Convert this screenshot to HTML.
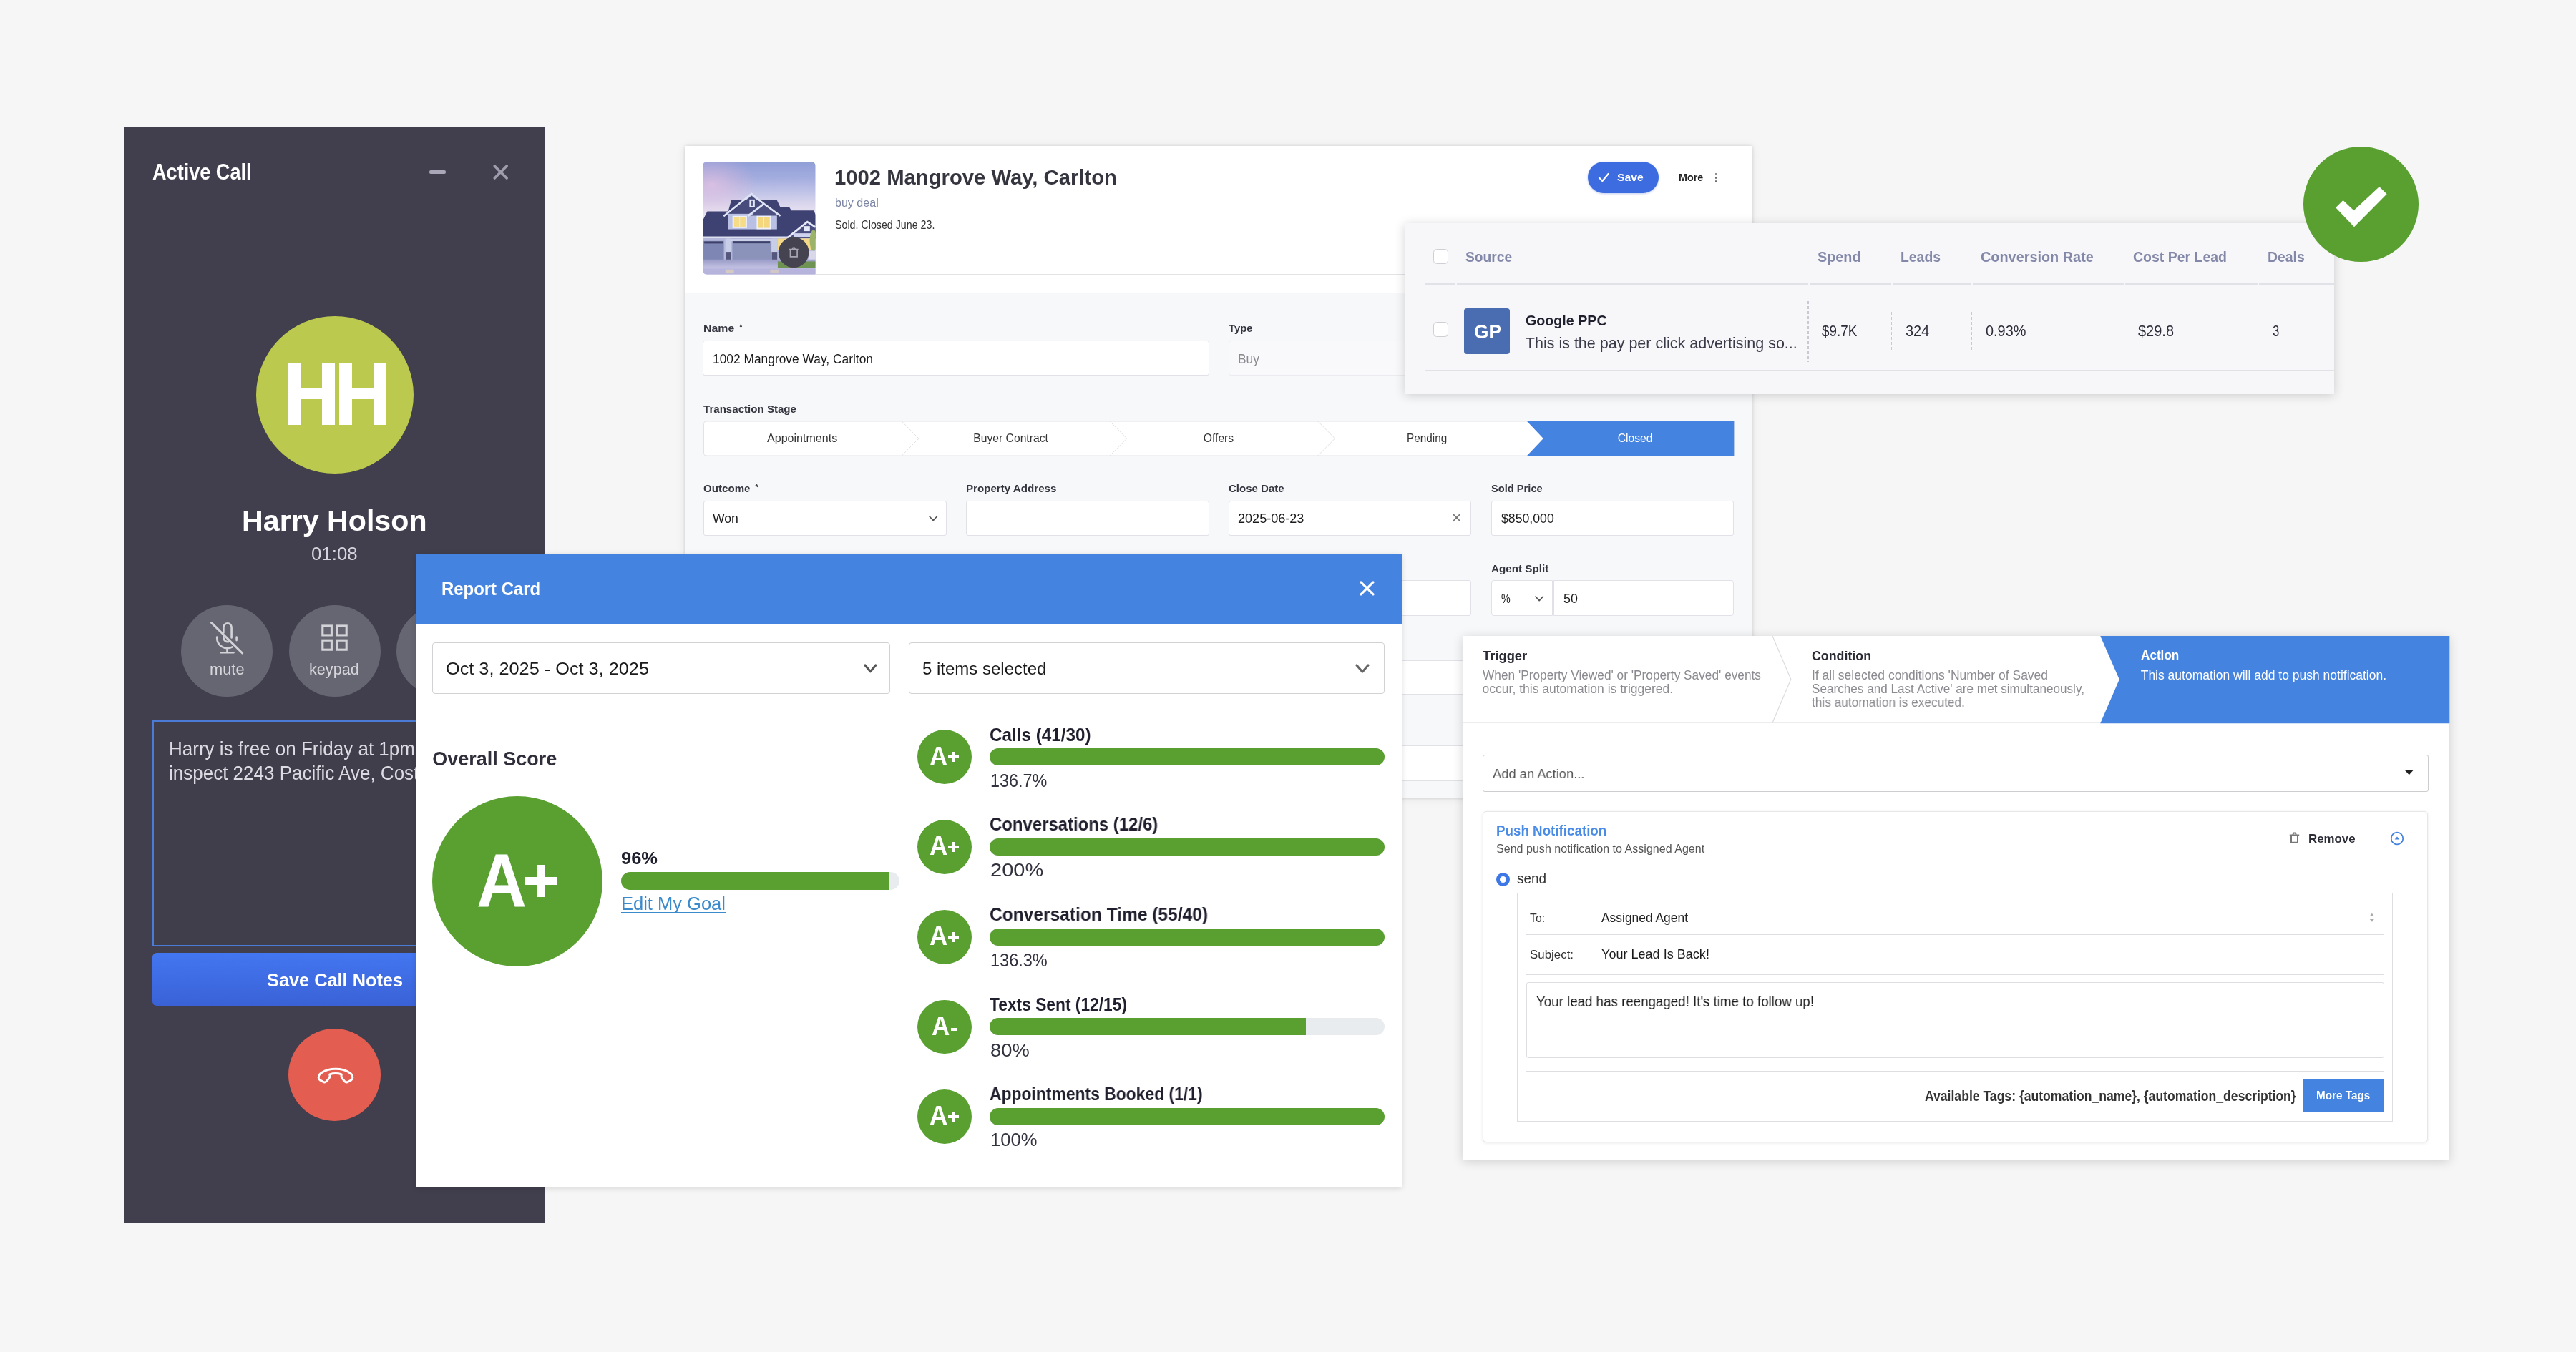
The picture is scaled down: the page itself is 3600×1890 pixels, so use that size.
<!DOCTYPE html>
<html><head><meta charset="utf-8"><title>CRM dashboard</title><style>
html,body{margin:0;padding:0}
body{width:3600px;height:1890px;background:#f6f6f6;position:relative;overflow:hidden;font-family:"Liberation Sans",sans-serif}
.a{position:absolute;box-sizing:border-box}
.t{position:absolute;white-space:nowrap;line-height:1;transform-origin:0 50%}
svg{overflow:visible}
#w{position:absolute;left:0;top:0;width:3600px;height:1890px;will-change:transform}
</style></head><body><div id="w">
<div class="a" style="left:173.00px;top:178.00px;width:589.00px;height:1532.00px;background:#413f4d;"></div>
<div class="t" style="left:213.00px;top:224.75px;font-size:31px;color:#fff;font-weight:bold;transform:scaleX(0.8739);">Active Call</div>
<div class="a" style="left:600.00px;top:238.40px;width:23.00px;height:4.20px;background:#aaa8b8;border-radius:2px;"></div>
<svg class="a" style="left:688px;top:229px;" width="24" height="24" viewBox="688 229 24 24"><path d="M691.2 232.1L708.2 249.1M708.2 232.1L691.2 249.1" stroke="#9f9dad" stroke-width="3.6" stroke-linecap="round" fill="none"/></svg>
<div class="a" style="left:357.50px;top:441.50px;width:220.00px;height:220.00px;background:#bcc94f;border-radius:50%;"></div>
<div class="a" style="left:402.20px;top:508.00px;width:17.80px;height:85.50px;background:#fff;"></div>
<div class="a" style="left:450.30px;top:508.00px;width:17.70px;height:85.50px;background:#fff;"></div>
<div class="a" style="left:474.20px;top:508.00px;width:17.60px;height:85.50px;background:#fff;"></div>
<div class="a" style="left:522.80px;top:508.00px;width:17.60px;height:85.50px;background:#fff;"></div>
<div class="a" style="left:419.00px;top:542.30px;width:32.00px;height:16.00px;background:#fff;"></div>
<div class="a" style="left:491.00px;top:542.30px;width:32.50px;height:16.00px;background:#fff;"></div>
<div class="t" style="left:338.40px;top:707.79px;font-size:41px;color:#fff;font-weight:bold;transform:scaleX(1.0043);">Harry Holson</div>
<div class="t" style="left:435.40px;top:760.69px;font-size:26px;color:#d5d4dc;transform:scaleX(0.9929);">01:08</div>
<div class="a" style="left:253.00px;top:846.00px;width:128.00px;height:128.00px;background:#666672;border-radius:50%;"></div>
<div class="a" style="left:403.50px;top:846.00px;width:128.00px;height:128.00px;background:#666672;border-radius:50%;"></div>
<div class="a" style="left:554.00px;top:846.00px;width:128.00px;height:128.00px;background:#666672;border-radius:50%;"></div>
<svg class="a" style="left:290px;top:865px;" width="55" height="55" viewBox="290 865 55 55"><g fill="none" stroke="#d2d2d7" stroke-width="2.6" stroke-linecap="round" stroke-linejoin="round">
<path d="M312.4 884.5V877a5.6 5.6 0 0 1 11.2 0v14.5"/>
<path d="M312.4 889v2.5a5.6 5.6 0 0 0 7.6 5.2"/>
<path d="M303.2 890.5v1.2a14.5 14.5 0 0 0 21.5 12.6"/>
<path d="M330.6 890.5v4.6"/>
<path d="M317.5 906.5V912M308.3 912.3H326.5"/>
<path d="M295.6 870.6L338.6 913" stroke-width="3"/></g></svg>
<div class="t" style="left:292.50px;top:925.37px;font-size:22px;color:#d6d6db;transform:scaleX(0.9919);">mute</div>
<svg class="a" style="left:445px;top:870px;" width="45" height="45" viewBox="445 870 45 45"><g fill="none" stroke="#d2d2d7" stroke-width="3.1">
<rect x="450.8" y="874.9" width="12.6" height="13"/><rect x="471.2" y="874.9" width="13" height="13"/>
<rect x="450.8" y="895.2" width="12.6" height="13"/><rect x="471.2" y="895.2" width="13" height="13"/></g></svg>
<div class="t" style="left:432.40px;top:925.37px;font-size:22px;color:#d6d6db;transform:scaleX(0.9838);">keypad</div>
<div class="a" style="left:213.00px;top:1007.30px;width:509.00px;height:315.70px;border:2px solid #4b7bd6;background:#3f3e4a;"></div>
<div class="t" style="left:236.00px;top:1032.69px;font-size:27.3px;color:#dcdbe3;transform:scaleX(0.9526);">Harry is free on Friday at 1pm to</div>
<div class="t" style="left:236.00px;top:1066.89px;font-size:27.3px;color:#dcdbe3;transform:scaleX(0.9526);">inspect 2243 Pacific Ave, Costa Mesa</div>
<div class="a" style="left:213.00px;top:1332.00px;width:509.00px;height:73.50px;background:linear-gradient(#4376f1,#3a62d6);border-radius:6px;"></div>
<div class="t" style="left:372.60px;top:1356.79px;font-size:26px;color:#fff;font-weight:bold;transform:scaleX(0.9740);">Save Call Notes</div>
<div class="a" style="left:403.00px;top:1438.20px;width:128.80px;height:128.80px;background:#e35d50;border-radius:50%;"></div>
<svg class="a" style="left:440px;top:1488px;" width="58" height="30" viewBox="440 1488 58 30"><path d="M445.2 1506.5c0-3 1.2-5 3.6-6.6c5.6-3.8 12.2-5.6 20.2-5.6s14.6 1.8 20.2 5.6c2.400 1.6 3.600 3.600 3.600 6.600c0 1.500-0.700 2.700-2.000 3.400l-4.300 2.400c-1.800 1-3.700 0.600-5.000-0.900l-3.400-4.000c-0.900-1.100-1.300-2.300-1.100-3.700l0.300-1.900c-2.700-0.900-5.500-1.300-8.300-1.300s-5.600 0.400-8.300 1.300l0.300 1.900c0.200 1.400-0.200 2.600-1.100 3.700l-3.400 4.000c-1.300 1.500-3.200 1.900-5.000 0.900l-4.300-2.400c-1.300-0.700-2.000-1.900-2.000-3.400z" fill="none" stroke="#fff" stroke-width="3" stroke-linejoin="round"/></svg>
<div class="a" style="left:957.00px;top:203.70px;width:1491.50px;height:912.30px;background:#f7f8fa;box-shadow:0 0 5px rgba(0,0,0,.13),0 1px 14px rgba(0,0,0,.07);"></div>
<div class="a" style="left:957.00px;top:203.70px;width:1491.50px;height:206.10px;background:#fff;"></div>
<div class="a" style="left:1140.00px;top:382.80px;width:1283.50px;height:1.20px;background:#e3e3e8;"></div>
<svg class="a" style="left:982.2px;top:226px" width="157.8" height="157.8" viewBox="92 83 1185 1185">
<defs><linearGradient id="sky" x1="0" y1="0" x2="0" y2="1"><stop offset="0" stop-color="#919fd8"/><stop offset=".14" stop-color="#a2acde"/><stop offset=".28" stop-color="#c3c5e8"/><stop offset=".4" stop-color="#dfdaee"/><stop offset=".52" stop-color="#eee7f3"/></linearGradient>
<radialGradient id="pk" cx=".08" cy=".3" r=".4"><stop offset="0" stop-color="#e8c3e2" stop-opacity=".7"/><stop offset="1" stop-color="#e3b4d8" stop-opacity="0"/></radialGradient>
<linearGradient id="drv" x1="0" y1="0" x2="0" y2="1"><stop offset="0" stop-color="#9a9cc8"/><stop offset=".55" stop-color="#c2c0e2"/><stop offset="1" stop-color="#b2b0da"/></linearGradient>
<clipPath id="hc"><path d="M137 83H1232a45 45 0 0 1 45 45V1268H137a45 45 0 0 1-45-45V128a45 45 0 0 1 45-45z"/></clipPath></defs>
<g clip-path="url(#hc)">
<rect x="92" y="83" width="1185" height="1185" fill="url(#sky)"/><rect x="92" y="83" width="1185" height="800" fill="url(#pk)"/>
<path d="M92 700L140 605H360L392 488H872L905 558H1000L1022 596H1258L1277 640V900H92z" fill="#3e4272"/>
<path d="M92 885H1277V1130H92z" fill="#b4b9dc"/>
<path d="M355 630H872V795H355z" fill="#b9c0e4"/>
<path d="M605 440L380 625H830z" fill="#474c7c"/>
<path d="M735 540L600 650H880z" fill="#4c5182"/>
<path d="M312 655L605 420L740 530" fill="none" stroke="#dfe3f6" stroke-width="20"/>
<path d="M565 655L735 525L908 652" fill="none" stroke="#dfe3f6" stroke-width="20"/>
<rect x="583" y="480" width="56" height="82" fill="#e4e8f8"/><rect x="597" y="494" width="28" height="54" fill="#5a5f90"/>
<rect x="405" y="652" width="152" height="128" fill="#eef0fa"/><rect x="420" y="668" width="122" height="98" fill="#f6dc86"/><rect x="478" y="668" width="6" height="98" fill="#eef0fa"/>
<rect x="658" y="652" width="152" height="142" fill="#eef0fa"/><rect x="674" y="668" width="122" height="110" fill="#f4d67c"/><rect x="732" y="668" width="6" height="110" fill="#eef0fa"/>
<path d="M300 795H900L912 868H292z" fill="#3e4272"/>
<rect x="92" y="868" width="910" height="18" fill="#e6e9f8"/>
<rect x="100" y="915" width="214" height="200" fill="#7e87b3"/><rect x="108" y="920" width="198" height="22" fill="#3d416a"/>
<rect x="403" y="912" width="404" height="212" fill="#8b93bb"/><rect x="412" y="918" width="386" height="22" fill="#3d416a"/>
<rect x="388" y="898" width="434" height="16" fill="#e6e9f8"/>
<rect x="330" y="890" width="58" height="225" fill="#c8cde8"/><rect x="332" y="1030" width="54" height="85" fill="#55567c"/>
<rect x="815" y="890" width="62" height="225" fill="#c8cde8"/><rect x="817" y="1030" width="58" height="85" fill="#55567c"/>
<rect x="878" y="890" width="399" height="120" fill="#f5d888"/>
<path d="M985 885L1190 715L1277 772V885z" fill="#4a4f80"/>
<path d="M985 880L1190 715L1277 772" fill="none" stroke="#e6e9f8" stroke-width="20"/>
<rect x="1155" y="760" width="62" height="52" fill="#e6e9f8"/><rect x="1050" y="835" width="227" height="40" fill="#cfd3ee"/>
<ellipse cx="1255" cy="910" rx="40" ry="110" fill="#9bb46a"/>
<rect x="1200" y="1020" width="77" height="100" fill="#d8d8ea"/>
<rect x="92" y="1110" width="1185" height="158" fill="url(#drv)"/>
<rect x="880" y="1130" width="397" height="70" fill="#6f9352"/>
<rect x="92" y="1205" width="1185" height="63" fill="#b5b3dc" opacity=".8"/>
<rect x="330" y="1215" width="90" height="40" fill="#e9d9b0" opacity=".6"/><rect x="800" y="1215" width="90" height="40" fill="#e9d9b0" opacity=".5"/>
<circle cx="1047" cy="1035" r="160" fill="#45434f"/>
<g fill="none" stroke="#a6a5b2" stroke-width="13"><path d="M1012 1006V1080H1084V1006"/><path d="M1000 1003H1096"/><path d="M1034 1000L1040 986H1056L1062 1000"/></g>
</g></svg>
<div class="t" style="left:1165.80px;top:233.85px;font-size:29px;color:#35353f;font-weight:bold;transform:scaleX(1.0086);">1002 Mangrove Way, Carlton</div>
<div class="t" style="left:1167.20px;top:275.13px;font-size:16.5px;color:#7b84a3;transform:scaleX(0.9732);">buy deal</div>
<div class="t" style="left:1167.20px;top:306.28px;font-size:16.2px;color:#333;transform:scaleX(0.8800);">Sold. Closed June 23.</div>
<div class="a" style="left:2219.30px;top:226.00px;width:98.90px;height:44.00px;background:#3d6ce0;border-radius:22px;box-shadow:0 1px 3px rgba(40,80,200,.3);"></div>
<svg class="a" style="left:2230px;top:238px;" width="22" height="20" viewBox="2230 238 22 20"><path d="M2235 248.6L2239.3 253L2247.6 243" stroke="#fff" stroke-width="2.2" fill="none" stroke-linecap="round" stroke-linejoin="round"/></svg>
<div class="t" style="left:2259.80px;top:240.48px;font-size:15.5px;color:#fff;font-weight:bold;transform:scaleX(1.0140);">Save</div>
<div class="t" style="left:2345.70px;top:241.35px;font-size:14px;color:#222;font-weight:bold;transform:scaleX(1.0221);">More</div>
<div class="a" style="left:2396.60px;top:241.55px;width:2.90px;height:2.90px;background:#6a6a6a;border-radius:50%;"></div>
<div class="a" style="left:2396.60px;top:246.75px;width:2.90px;height:2.90px;background:#6a6a6a;border-radius:50%;"></div>
<div class="a" style="left:2396.60px;top:251.85px;width:2.90px;height:2.90px;background:#6a6a6a;border-radius:50%;"></div>
<div class="t" style="left:983.00px;top:451.38px;font-size:15.5px;color:#35353f;font-weight:bold;transform:scaleX(1.0237);">Name</div>
<div class="t" style="left:1033.20px;top:452.19px;font-size:11px;color:#35353f;font-weight:bold;">*</div>
<div class="a" style="left:982.40px;top:476.00px;width:707.40px;height:49.30px;background:#fff;border:1px solid #e1e1e7;border-radius:3px;"></div>
<div class="t" style="left:996.10px;top:492.76px;font-size:18px;color:#1a1a1a;transform:scaleX(0.9651);">1002 Mangrove Way, Carlton</div>
<div class="t" style="left:1716.80px;top:451.38px;font-size:15.5px;color:#35353f;font-weight:bold;transform:scaleX(0.9563);">Type</div>
<div class="a" style="left:1716.80px;top:476.00px;width:706.70px;height:49.30px;background:#f9f9fb;border:1px solid #ebebf0;border-radius:3px;"></div>
<div class="t" style="left:1729.80px;top:492.76px;font-size:18px;color:#8a8a90;transform:scaleX(0.9676);">Buy</div>
<div class="t" style="left:983.00px;top:563.68px;font-size:15.5px;color:#35353f;font-weight:bold;transform:scaleX(0.9735);">Transaction Stage</div>
<svg class="a" style="left:980px;top:586px" width="1446" height="54" viewBox="980 586 1446 54">
<path d="M987 589H2423.3V637H987a3.500 3.500 0 0 1-3.500-3.500V592.500a3.500 3.500 0 0 1 3.500-3.500z" fill="#fff" stroke="#e2e2e8" stroke-width="1"/>
<path d="M2133.6 588.5H2423.3V637.5H2133.6L2156.8 613z" fill="#4583e0"/>
<g fill="none" stroke="#e2e2e8" stroke-width="1"><path d="M1260.2 589L1284 613L1260.2 637"/><path d="M1551 589L1574.800 613L1551 637"/><path d="M1841.800 589L1865.600 613L1841.800 637"/></g></svg>
<div class="t" style="left:1072.05px;top:604.81px;font-size:15.7px;color:#333;transform:scaleX(1.0239);">Appointments</div>
<div class="t" style="left:1360.25px;top:604.81px;font-size:15.7px;color:#333;">Buyer Contract</div>
<div class="t" style="left:1681.75px;top:604.81px;font-size:15.7px;color:#333;">Offers</div>
<div class="t" style="left:1966.25px;top:604.81px;font-size:15.7px;color:#333;transform:scaleX(0.9771);">Pending</div>
<div class="t" style="left:2260.65px;top:604.81px;font-size:15.7px;color:#fff;">Closed</div>
<div class="t" style="left:983.00px;top:675.38px;font-size:15.5px;color:#35353f;font-weight:bold;transform:scaleX(0.9748);">Outcome</div>
<div class="t" style="left:1055.50px;top:676.19px;font-size:11px;color:#35353f;font-weight:bold;">*</div>
<div class="t" style="left:1349.80px;top:675.38px;font-size:15.5px;color:#35353f;font-weight:bold;transform:scaleX(0.9760);">Property Address</div>
<div class="t" style="left:1716.80px;top:675.38px;font-size:15.5px;color:#35353f;font-weight:bold;transform:scaleX(0.9688);">Close Date</div>
<div class="t" style="left:2083.60px;top:675.38px;font-size:15.5px;color:#35353f;font-weight:bold;transform:scaleX(0.9460);">Sold Price</div>
<div class="a" style="left:983.00px;top:699.50px;width:339.50px;height:49.70px;background:#fff;border:1px solid #e1e1e7;border-radius:3px;"></div>
<div class="a" style="left:1349.80px;top:699.50px;width:339.90px;height:49.70px;background:#fff;border:1px solid #e1e1e7;border-radius:3px;"></div>
<div class="a" style="left:1716.80px;top:699.50px;width:339.60px;height:49.70px;background:#fff;border:1px solid #e1e1e7;border-radius:3px;"></div>
<div class="a" style="left:2083.60px;top:699.50px;width:339.90px;height:49.70px;background:#fff;border:1px solid #e1e1e7;border-radius:3px;"></div>
<div class="t" style="left:995.90px;top:717.18px;font-size:17.5px;color:#1a1a1a;transform:scaleX(1.0068);">Won</div>
<svg class="a" style="left:1295.6px;top:719.0px;" width="16.40000000000009" height="11.599999999999909" viewBox="1295.6 719.0 16.40000000000009 11.599999999999909"><path d="M1298.6 722.0L1303.8 727.5999999999999L1309.0 722.0" fill="none" stroke="#555" stroke-width="1.7" stroke-linecap="round" stroke-linejoin="round"/></svg>
<div class="t" style="left:1730.10px;top:717.18px;font-size:17.5px;color:#1a1a1a;transform:scaleX(1.0323);">2025-06-23</div>
<svg class="a" style="left:2028px;top:716px;" width="16" height="16" viewBox="2028 716 16 16"><path d="M2030.6 718.6L2040.6 728.600M2040.6 718.6L2030.6 728.600" stroke="#777" stroke-width="1.6" fill="none"/></svg>
<div class="t" style="left:2097.50px;top:717.18px;font-size:17.5px;color:#1a1a1a;transform:scaleX(1.0099);">$850,000</div>
<div class="t" style="left:2083.60px;top:787.38px;font-size:15.5px;color:#35353f;font-weight:bold;transform:scaleX(0.9816);">Agent Split</div>
<div class="a" style="left:983.00px;top:811.40px;width:339.50px;height:49.40px;background:#fff;border:1px solid #e1e1e7;border-radius:3px;"></div>
<div class="a" style="left:1349.80px;top:811.40px;width:339.90px;height:49.40px;background:#fff;border:1px solid #e1e1e7;border-radius:3px;"></div>
<div class="a" style="left:1716.80px;top:811.40px;width:339.60px;height:49.40px;background:#fff;border:1px solid #e1e1e7;border-radius:3px;"></div>
<div class="a" style="left:2083.60px;top:811.40px;width:86.80px;height:49.40px;background:#fff;border:1px solid #e1e1e7;border-radius:3px;border-radius:4px 0 0 4px;"></div>
<div class="a" style="left:2171.40px;top:811.40px;width:252.10px;height:49.40px;background:#fff;border:1px solid #e1e1e7;border-radius:3px;border-radius:0 4px 4px 0;"></div>
<div class="t" style="left:2097.50px;top:828.98px;font-size:17.5px;color:#1a1a1a;transform:scaleX(0.8154);">%</div>
<svg class="a" style="left:2143.3px;top:831.0px;" width="16.399999999999636" height="11.599999999999909" viewBox="2143.3 831.0 16.399999999999636 11.599999999999909"><path d="M2146.3 834.0L2151.5 839.5999999999999L2156.7 834.0" fill="none" stroke="#555" stroke-width="1.7" stroke-linecap="round" stroke-linejoin="round"/></svg>
<div class="t" style="left:2184.80px;top:828.98px;font-size:17.5px;color:#1a1a1a;transform:scaleX(1.0170);">50</div>
<div class="a" style="left:983.00px;top:923.10px;width:1440.50px;height:47.90px;background:#fff;border:1px solid #e1e1e7;border-radius:3px;"></div>
<div class="a" style="left:983.00px;top:1041.60px;width:1440.50px;height:50.00px;background:#fff;border:1px solid #e1e1e7;border-radius:3px;"></div>
<div class="a" style="left:1963.00px;top:311.70px;width:1299.00px;height:239.50px;background:#f7f7fa;box-shadow:0 2px 14px rgba(0,0,0,.17);"></div>
<div class="a" style="left:2003.30px;top:348.40px;width:20.50px;height:21.00px;background:#fff;border:1.5px solid #cfcfd6;border-radius:4.5px;"></div>
<div class="t" style="left:2048.20px;top:349.34px;font-size:20.5px;color:#8388a8;font-weight:bold;transform:scaleX(0.9382);">Source</div>
<div class="t" style="left:2540.00px;top:349.34px;font-size:20.5px;color:#8388a8;font-weight:bold;transform:scaleX(0.9660);">Spend</div>
<div class="t" style="left:2656.40px;top:349.34px;font-size:20.5px;color:#8388a8;font-weight:bold;transform:scaleX(0.9452);">Leads</div>
<div class="t" style="left:2767.90px;top:349.34px;font-size:20.5px;color:#8388a8;font-weight:bold;transform:scaleX(0.9686);">Conversion Rate</div>
<div class="t" style="left:2981.40px;top:349.34px;font-size:20.5px;color:#8388a8;font-weight:bold;transform:scaleX(0.9502);">Cost Per Lead</div>
<div class="t" style="left:3168.60px;top:349.34px;font-size:20.5px;color:#8388a8;font-weight:bold;transform:scaleX(0.9473);">Deals</div>
<div class="a" style="left:1992.00px;top:395.50px;width:1270.00px;height:3.10px;background:#e0e2e8;"></div>
<div class="a" style="left:2034.00px;top:395.50px;width:2.00px;height:3.10px;background:#f7f7fa;"></div>
<div class="a" style="left:2526.50px;top:395.50px;width:2.00px;height:3.10px;background:#f7f7fa;"></div>
<div class="a" style="left:2643.00px;top:395.50px;width:2.00px;height:3.10px;background:#f7f7fa;"></div>
<div class="a" style="left:2755.00px;top:395.50px;width:2.00px;height:3.10px;background:#f7f7fa;"></div>
<div class="a" style="left:2968.00px;top:395.50px;width:2.00px;height:3.10px;background:#f7f7fa;"></div>
<div class="a" style="left:3155.00px;top:395.50px;width:2.00px;height:3.10px;background:#f7f7fa;"></div>
<div class="a" style="left:2003.30px;top:450.30px;width:20.50px;height:21.00px;background:#fff;border:1.5px solid #cfcfd6;border-radius:4.5px;"></div>
<div class="a" style="left:2046.00px;top:431.30px;width:64.20px;height:64.20px;background:#4a6cb0;border-radius:4px;"></div>
<div class="t" style="left:2059.60px;top:450.29px;font-size:28px;color:#fff;font-weight:bold;transform:scaleX(0.9392);">GP</div>
<div class="t" style="left:2131.80px;top:437.22px;font-size:21px;color:#1f1f2e;font-weight:bold;transform:scaleX(0.9363);">Google PPC</div>
<div class="t" style="left:2131.80px;top:469.60px;font-size:21.5px;color:#3a3a48;">This is the pay per click advertising so...</div>
<div class="a" style="left:2526.40px;top:421.00px;width:1.20px;height:85.00px;background:repeating-linear-gradient(#c9c9d2 0 4px,transparent 4px 7px);"></div>
<div class="a" style="left:2642.60px;top:436.40px;width:1.20px;height:53.60px;background:repeating-linear-gradient(#c9c9d2 0 4px,transparent 4px 7px);"></div>
<div class="a" style="left:2754.40px;top:436.40px;width:1.20px;height:53.60px;background:repeating-linear-gradient(#c9c9d2 0 4px,transparent 4px 7px);"></div>
<div class="a" style="left:2968.00px;top:436.40px;width:1.20px;height:53.60px;background:repeating-linear-gradient(#c9c9d2 0 4px,transparent 4px 7px);"></div>
<div class="a" style="left:3154.80px;top:436.40px;width:1.20px;height:53.60px;background:repeating-linear-gradient(#c9c9d2 0 4px,transparent 4px 7px);"></div>
<div class="t" style="left:2546.40px;top:452.80px;font-size:21.5px;color:#2d2d3a;transform:scaleX(0.8759);">$9.7K</div>
<div class="t" style="left:2663.20px;top:452.80px;font-size:21.5px;color:#2d2d3a;transform:scaleX(0.9260);">324</div>
<div class="t" style="left:2775.00px;top:452.80px;font-size:21.5px;color:#2d2d3a;transform:scaleX(0.9253);">0.93%</div>
<div class="t" style="left:2988.20px;top:452.80px;font-size:21.5px;color:#2d2d3a;transform:scaleX(0.9293);">$29.8</div>
<div class="t" style="left:3175.70px;top:452.80px;font-size:21.5px;color:#2d2d3a;transform:scaleX(0.7794);">3</div>
<div class="a" style="left:1992.00px;top:517.00px;width:1270.00px;height:1.20px;background:#e0e2e8;"></div>
<div class="a" style="left:3219.10px;top:205.00px;width:160.80px;height:160.80px;background:#59a031;border-radius:50%;"></div>
<svg class="a" style="left:3255px;top:255px;" width="90" height="70" viewBox="3255 255 90 70"><path d="M3264.2 290.2L3274.5 280L3289.5 294.3L3325.1 261L3335.6 271.2L3290 317.2z" fill="#fff"/></svg>
<div class="a" style="left:2044.00px;top:889.00px;width:1379.30px;height:732.50px;background:#fff;box-shadow:0 2px 14px rgba(0,0,0,.16);"></div>
<div class="a" style="left:2044.00px;top:1010.00px;width:1379.30px;height:1.20px;background:#ececef;"></div>
<svg class="a" style="left:2044px;top:889px" width="1380" height="123" viewBox="2044 889 1380 123">
<path d="M2477 889L2502.8 949.5L2477 1010.5" fill="none" stroke="#dcdce0" stroke-width="1.2"/>
<path d="M2935.2 889H3423.3V1011.2H2935.2L2961.8 949.7z" fill="#4583e0"/></svg>
<div class="t" style="left:2071.60px;top:906.91px;font-size:19px;color:#2a2a35;font-weight:bold;transform:scaleX(0.9657);">Trigger</div>
<div class="t" style="left:2071.60px;top:936.18px;font-size:17.5px;color:#8a8a90;transform:scaleX(0.9864);">When &#x27;Property Viewed&#x27; or &#x27;Property Saved&#x27; events</div>
<div class="t" style="left:2071.60px;top:955.18px;font-size:17.5px;color:#8a8a90;">occur, this automation is triggered.</div>
<div class="t" style="left:2531.90px;top:906.91px;font-size:19px;color:#2a2a35;font-weight:bold;transform:scaleX(0.9364);">Condition</div>
<div class="t" style="left:2531.90px;top:936.18px;font-size:17.5px;color:#8a8a90;">If all selected conditions &#x27;Number of Saved</div>
<div class="t" style="left:2531.90px;top:955.18px;font-size:17.5px;color:#8a8a90;transform:scaleX(0.9789);">Searches and Last Active&#x27; are met simultaneously,</div>
<div class="t" style="left:2531.90px;top:974.18px;font-size:17.5px;color:#8a8a90;transform:scaleX(0.9864);">this automation is executed.</div>
<div class="t" style="left:2991.70px;top:906.41px;font-size:19px;color:#fff;font-weight:bold;transform:scaleX(0.9020);">Action</div>
<div class="t" style="left:2991.70px;top:936.18px;font-size:17.5px;color:#fff;">This automation will add to push notification.</div>
<div class="a" style="left:2071.60px;top:1055.00px;width:1322.00px;height:51.50px;background:#fff;border:1px solid #cdcdd0;border-radius:3px;"></div>
<div class="t" style="left:2086.30px;top:1072.11px;font-size:19px;color:#555;transform:scaleX(0.9655);">Add an Action...</div>
<svg class="a" style="left:3358px;top:1074px;" width="18" height="12" viewBox="3358 1074 18 12"><path d="M3360.9 1076.8H3372.6L3366.75 1083.3z" fill="#222"/></svg>
<div class="a" style="left:2072.30px;top:1133.60px;width:1321.10px;height:463.80px;background:#fff;border:1px solid #e7e7ea;border-radius:5px;box-shadow:0 1px 4px rgba(0,0,0,.09);"></div>
<div class="t" style="left:2090.80px;top:1152.49px;font-size:19.5px;color:#4a8be6;font-weight:bold;transform:scaleX(0.9623);">Push Notification</div>
<div class="t" style="left:2090.80px;top:1178.75px;font-size:16px;color:#555;transform:scaleX(1.0041);">Send push notification to Assigned Agent</div>
<svg class="a" style="left:3196px;top:1160px;" width="21" height="22" viewBox="3196 1160 21 22"><g fill="none" stroke="#777" stroke-width="2"><path d="M3202 1167.8V1177.7H3211V1167.8"/><path d="M3199.8 1167.5H3213.2"/><path d="M3204.3 1167L3205.3 1164.5H3207.8L3208.8 1167"/></g></svg>
<div class="t" style="left:3226.40px;top:1163.91px;font-size:17px;color:#2d2d38;font-weight:bold;transform:scaleX(0.9920);">Remove</div>
<svg class="a" style="left:3338px;top:1160px;" width="24" height="24" viewBox="3338 1160 24 24"><circle cx="3350" cy="1172" r="8.3" fill="none" stroke="#4583e0" stroke-width="1.8"/><path d="M3346.6 1173.600L3350 1169.4L3353.400 1173.600z" fill="#4583e0"/></svg>
<div class="a" style="left:2090.80px;top:1219.50px;width:19.00px;height:19.00px;border:5px solid #3d78e6;border-radius:50%;background:#fff;"></div>
<div class="t" style="left:2119.80px;top:1218.07px;font-size:20px;color:#333;transform:scaleX(0.9458);">send</div>
<div class="a" style="left:2119.80px;top:1247.50px;width:1224.70px;height:320.70px;background:#fff;border:1px solid #dedee2;"></div>
<div class="t" style="left:2137.50px;top:1274.53px;font-size:16.5px;color:#333;transform:scaleX(0.9624);">To:</div>
<div class="t" style="left:2238.00px;top:1273.56px;font-size:18px;color:#222;transform:scaleX(0.9672);">Assigned Agent</div>
<svg class="a" style="left:3309px;top:1274px;" width="12" height="18" viewBox="3309 1274 12 18"><path d="M3311.5 1281L3314.85 1276.8L3318.2 1281zM3311.5 1284.6L3314.85 1288.8L3318.2 1284.6z" fill="#aaa"/></svg>
<div class="a" style="left:2132.40px;top:1305.60px;width:1199.40px;height:1.20px;background:#dedee2;"></div>
<div class="t" style="left:2137.50px;top:1326.43px;font-size:16.5px;color:#333;transform:scaleX(1.0234);">Subject:</div>
<div class="t" style="left:2238.00px;top:1325.34px;font-size:18.5px;color:#1a1a1a;transform:scaleX(0.9760);">Your Lead Is Back!</div>
<div class="a" style="left:2132.40px;top:1361.70px;width:1199.40px;height:1.20px;background:#dedee2;"></div>
<div class="a" style="left:2132.60px;top:1373.00px;width:1199.10px;height:106.40px;background:#fff;border:1px solid #dedee2;border-radius:3px;"></div>
<div class="t" style="left:2146.90px;top:1391.09px;font-size:19.5px;color:#1a1a1a;transform:scaleX(0.9602);">Your lead has reengaged! It&#x27;s time to follow up!</div>
<div class="a" style="left:2132.40px;top:1496.70px;width:1199.40px;height:1.20px;background:#dedee2;"></div>
<div class="a" style="left:3218.30px;top:1508.10px;width:113.70px;height:47.30px;background:#4583e0;border-radius:4px;"></div>
<div class="t" style="left:3237.20px;top:1523.21px;font-size:17px;color:#fff;font-weight:bold;transform:scaleX(0.8977);">More Tags</div>
<div class="t" style="left:2690.30px;top:1522.69px;font-size:19.5px;color:#333;font-weight:bold;transform:scaleX(0.9015);">Available Tags: {automation_name}, {automation_description}</div>
<div class="a" style="left:582.00px;top:775.00px;width:1377.00px;height:885.30px;background:#fff;box-shadow:0 1px 8px rgba(0,0,0,.14);"></div>
<div class="a" style="left:582.00px;top:775.00px;width:1377.00px;height:97.50px;background:#4583e0;"></div>
<div class="t" style="left:616.50px;top:810.53px;font-size:25px;color:#fff;font-weight:bold;transform:scaleX(0.9568);">Report Card</div>
<svg class="a" style="left:1898px;top:810px;" width="25" height="25" viewBox="1898 810 25 25"><path d="M1902 813.900L1919 830.900M1919 813.900L1902 830.900" stroke="#fff" stroke-width="3.1" stroke-linecap="round" fill="none"/></svg>
<div class="a" style="left:604.20px;top:898.20px;width:639.60px;height:71.50px;background:#fff;border:1px solid #d2d2d5;border-radius:4px;"></div>
<div class="t" style="left:623.40px;top:922.86px;font-size:24.5px;color:#1b1b1b;transform:scaleX(1.0322);">Oct 3, 2025 - Oct 3, 2025</div>
<svg class="a" style="left:1205.6999999999998px;top:926.8000000000001px;" width="20.800000000000182" height="14.799999999999955" viewBox="1205.6999999999998 926.8000000000001 20.800000000000182 14.799999999999955"><path d="M1208.6999999999998 929.8000000000001L1216.1 938.6L1223.5 929.8000000000001" fill="none" stroke="#555" stroke-width="3.1" stroke-linecap="round" stroke-linejoin="round"/></svg>
<div class="a" style="left:1270.20px;top:898.20px;width:665.00px;height:71.50px;background:#fff;border:1px solid #d2d2d5;border-radius:4px;"></div>
<div class="t" style="left:1288.80px;top:922.86px;font-size:24.5px;color:#1b1b1b;transform:scaleX(0.9796);">5 items selected</div>
<svg class="a" style="left:1893.2px;top:927.4px;" width="22.0" height="15.200000000000045" viewBox="1893.2 927.4 22.0 15.200000000000045"><path d="M1896.2 930.4L1904.2 939.6L1912.2 930.4" fill="none" stroke="#666" stroke-width="3.1" stroke-linecap="round" stroke-linejoin="round"/></svg>
<div class="t" style="left:604.20px;top:1048.34px;font-size:27px;color:#2f2e3a;font-weight:bold;">Overall Score</div>
<div class="a" style="left:603.80px;top:1112.80px;width:238.40px;height:238.40px;background:#59a031;border-radius:50%;"></div>
<div class="t" style="left:666.40px;top:1178.60px;font-size:105px;color:#fff;font-weight:bold;transform:scaleX(0.9227);">A</div>
<div class="a" style="left:733.50px;top:1225.70px;width:45.70px;height:11.70px;background:#fff;"></div>
<div class="a" style="left:750.40px;top:1209.00px;width:11.70px;height:45.00px;background:#fff;"></div>
<div class="t" style="left:868.00px;top:1187.98px;font-size:24px;color:#1f1f2e;font-weight:bold;transform:scaleX(1.0612);">96%</div>
<div class="a" style="left:867.50px;top:1219.10px;width:389.10px;height:25.30px;background:#e9ecef;border-radius:13px;overflow:hidden;"></div>
<div class="a" style="left:867.50px;top:1219.10px;width:374.70px;height:25.30px;background:#59a031;border-radius:13px 0 0 13px;"></div>
<div class="t" style="left:868.00px;top:1250.81px;font-size:25.5px;color:#3b8acb;">Edit My Goal</div>
<div class="a" style="left:868.00px;top:1274.60px;width:146.00px;height:2.00px;background:#3b8acb;"></div>
<div class="a" style="left:1281.80px;top:1020.40px;width:75.80px;height:75.80px;background:#59a031;border-radius:50%;"></div>
<div class="t" style="left:1299.20px;top:1039.62px;font-size:36px;color:#fff;font-weight:bold;transform:scaleX(0.9727);">A</div>
<div class="a" style="left:1325.30px;top:1056.40px;width:14.70px;height:3.80px;background:#fff;"></div>
<div class="a" style="left:1330.75px;top:1051.10px;width:3.80px;height:14.40px;background:#fff;"></div>
<div class="t" style="left:1382.90px;top:1014.63px;font-size:25px;color:#1f1f2e;font-weight:bold;transform:scaleX(0.9710);">Calls (41/30)</div>
<div class="a" style="left:1382.70px;top:1046.20px;width:552.50px;height:24.20px;background:#e9ecef;border-radius:13px;"></div>
<div class="a" style="left:1382.70px;top:1046.20px;width:552.50px;height:24.20px;background:#59a031;border-radius:13px;"></div>
<div class="t" style="left:1384.30px;top:1077.59px;font-size:26px;color:#333340;transform:scaleX(0.8990);">136.7%</div>
<div class="a" style="left:1281.80px;top:1146.10px;width:75.80px;height:75.80px;background:#59a031;border-radius:50%;"></div>
<div class="t" style="left:1299.20px;top:1165.32px;font-size:36px;color:#fff;font-weight:bold;transform:scaleX(0.9727);">A</div>
<div class="a" style="left:1325.30px;top:1182.10px;width:14.70px;height:3.80px;background:#fff;"></div>
<div class="a" style="left:1330.75px;top:1176.80px;width:3.80px;height:14.40px;background:#fff;"></div>
<div class="t" style="left:1382.90px;top:1140.33px;font-size:25px;color:#1f1f2e;font-weight:bold;transform:scaleX(0.9567);">Conversations (12/6)</div>
<div class="a" style="left:1382.70px;top:1171.90px;width:552.50px;height:24.20px;background:#e9ecef;border-radius:13px;"></div>
<div class="a" style="left:1382.70px;top:1171.90px;width:552.50px;height:24.20px;background:#59a031;border-radius:13px;"></div>
<div class="t" style="left:1384.30px;top:1203.29px;font-size:26px;color:#333340;transform:scaleX(1.1159);">200%</div>
<div class="a" style="left:1281.80px;top:1271.80px;width:75.80px;height:75.80px;background:#59a031;border-radius:50%;"></div>
<div class="t" style="left:1299.20px;top:1291.02px;font-size:36px;color:#fff;font-weight:bold;transform:scaleX(0.9727);">A</div>
<div class="a" style="left:1325.30px;top:1307.80px;width:14.70px;height:3.80px;background:#fff;"></div>
<div class="a" style="left:1330.75px;top:1302.50px;width:3.80px;height:14.40px;background:#fff;"></div>
<div class="t" style="left:1382.90px;top:1266.03px;font-size:25px;color:#1f1f2e;font-weight:bold;transform:scaleX(0.9815);">Conversation Time (55/40)</div>
<div class="a" style="left:1382.70px;top:1297.60px;width:552.50px;height:24.20px;background:#e9ecef;border-radius:13px;"></div>
<div class="a" style="left:1382.70px;top:1297.60px;width:552.50px;height:24.20px;background:#59a031;border-radius:13px;"></div>
<div class="t" style="left:1384.30px;top:1328.99px;font-size:26px;color:#333340;transform:scaleX(0.9047);">136.3%</div>
<div class="a" style="left:1281.80px;top:1397.50px;width:75.80px;height:75.80px;background:#59a031;border-radius:50%;"></div>
<div class="t" style="left:1302.00px;top:1416.72px;font-size:36px;color:#fff;font-weight:bold;transform:scaleX(0.9727);">A</div>
<div class="a" style="left:1329.00px;top:1437.20px;width:8.50px;height:4.20px;background:#fff;"></div>
<div class="t" style="left:1382.90px;top:1391.73px;font-size:25px;color:#1f1f2e;font-weight:bold;transform:scaleX(0.9110);">Texts Sent (12/15)</div>
<div class="a" style="left:1382.70px;top:1423.30px;width:552.50px;height:24.20px;background:#e9ecef;border-radius:13px;"></div>
<div class="a" style="left:1382.70px;top:1423.30px;width:442.00px;height:24.20px;background:#59a031;border-radius:13px 0 0 13px;"></div>
<div class="t" style="left:1384.30px;top:1454.69px;font-size:26px;color:#333340;transform:scaleX(1.0506);">80%</div>
<div class="a" style="left:1281.80px;top:1523.20px;width:75.80px;height:75.80px;background:#59a031;border-radius:50%;"></div>
<div class="t" style="left:1299.20px;top:1542.42px;font-size:36px;color:#fff;font-weight:bold;transform:scaleX(0.9727);">A</div>
<div class="a" style="left:1325.30px;top:1559.20px;width:14.70px;height:3.80px;background:#fff;"></div>
<div class="a" style="left:1330.75px;top:1553.90px;width:3.80px;height:14.40px;background:#fff;"></div>
<div class="t" style="left:1382.90px;top:1517.43px;font-size:25px;color:#1f1f2e;font-weight:bold;transform:scaleX(0.9154);">Appointments Booked (1/1)</div>
<div class="a" style="left:1382.70px;top:1549.00px;width:552.50px;height:24.20px;background:#e9ecef;border-radius:13px;"></div>
<div class="a" style="left:1382.70px;top:1549.00px;width:552.50px;height:24.20px;background:#59a031;border-radius:13px;"></div>
<div class="t" style="left:1384.30px;top:1580.39px;font-size:26px;color:#333340;transform:scaleX(0.9835);">100%</div>
</div></body></html>
